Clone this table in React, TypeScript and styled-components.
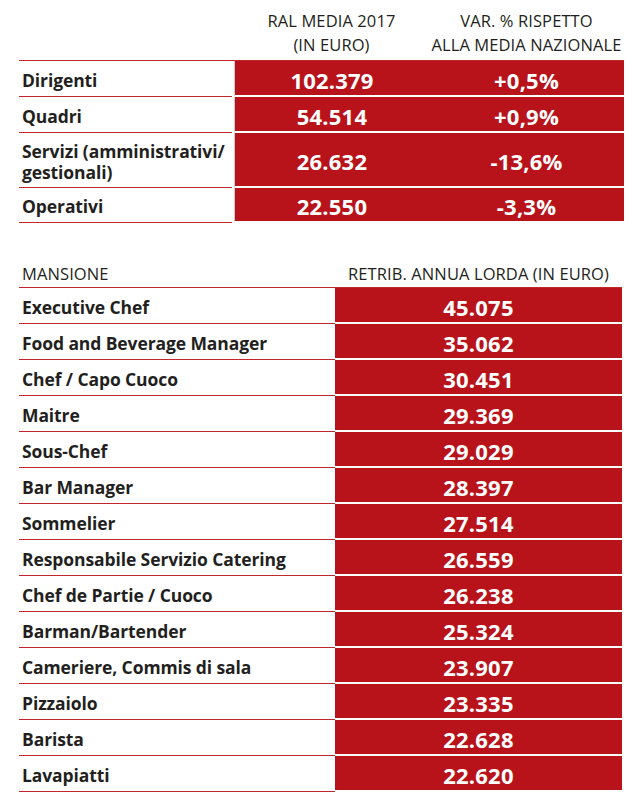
import { createGlobalStyle } from 'styled-components';
import styled from 'styled-components';

const GlobalStyle = createGlobalStyle`
  html, body {
    margin: 0;
    padding: 0;
    background: #ffffff;
  }
  body {
    font-family: 'Open Sans', 'Liberation Sans', sans-serif;
    color: #231f20;
  }
`;

const categories = [
  { label: 'Dirigenti', ral: '102.379', variation: '+0,5%', height: 36 },
  { label: 'Quadri', ral: '54.514', variation: '+0,9%', height: 36 },
  { label: 'Servizi (amministrativi/ gestionali)', ral: '26.632', variation: '-13,6%', height: 55 },
  { label: 'Operativi', ral: '22.550', variation: '-3,3%', height: 35 },
];

const roles = [
  ['Executive Chef', '45.075'],
  ['Food and Beverage Manager', '35.062'],
  ['Chef / Capo Cuoco', '30.451'],
  ['Maitre', '29.369'],
  ['Sous-Chef', '29.029'],
  ['Bar Manager', '28.397'],
  ['Sommelier', '27.514'],
  ['Responsabile Servizio Catering', '26.559'],
  ['Chef de Partie / Cuoco', '26.238'],
  ['Barman/Bartender', '25.324'],
  ['Cameriere, Commis di sala', '23.907'],
  ['Pizzaiolo', '23.335'],
  ['Barista', '22.628'],
  ['Lavapiatti', '22.620'],
];

const App = () => {
  return (
    <>
      <GlobalStyle />
      <Page>
        <SummaryTable>
          <HeaderCell />
          <HeaderCell $center>
            RAL MEDIA 2017
            <br />
            (IN EURO)
          </HeaderCell>
          <HeaderCell $center>
            VAR. % RISPETTO
            <br />
            ALLA MEDIA NAZIONALE
          </HeaderCell>
          {categories.map((row, i) => (
            <SummaryRow key={row.label} $height={row.height} $first={i === 0}>
              <LabelCell $wrap>{row.label}</LabelCell>
              <ValueCell $divider>{row.ral}</ValueCell>
              <ValueCell>{row.variation}</ValueCell>
            </SummaryRow>
          ))}
        </SummaryTable>

        <RoleTable>
          <RoleHeader>
            <HeaderText>MANSIONE</HeaderText>
            <HeaderText $center>RETRIB. ANNUA LORDA (IN EURO)</HeaderText>
          </RoleHeader>
          {roles.map(([name, value]) => (
            <RoleRow key={name}>
              <LabelCell>{name}</LabelCell>
              <ValueCell>{value}</ValueCell>
            </RoleRow>
          ))}
        </RoleTable>
      </Page>
    </>
  );
};

export default App;

const Page = styled.div`
  width: 641px;
  padding: 0 17px 0 19px;
  box-sizing: border-box;
`;

const SummaryTable = styled.div`
  display: grid;
  grid-template-columns: 215px 1fr 1fr;
`;

const HeaderCell = styled.div<{ $center?: boolean }>`
  padding: 9px 0 3px;
  font-size: 16.5px;
  line-height: 24px;
  letter-spacing: 0.1px;
  text-align: ${(p) => (p.$center ? 'center' : 'left')};
  height: 48px;
`;

const SummaryRow = styled.div<{ $height: number; $first?: boolean }>`
  grid-column: 1 / -1;
  display: grid;
  grid-template-columns: subgrid;
  height: ${(p) => p.$height}px;
  border-top: ${(p) => (p.$first ? '1.5px solid #c1272d' : 'none')};
`;

const LabelCell = styled.div<{ $wrap?: boolean }>`
  display: flex;
  align-items: center;
  padding: 3px 0 0 3px;
  font-size: 17.5px;
  font-weight: 700;
  line-height: 21px;
  letter-spacing: -0.1px;
  border-bottom: 1.5px solid #c1272d;
  max-width: ${(p) => (p.$wrap ? '210px' : 'none')};
`;

const ValueCell = styled.div<{ $divider?: boolean }>`
  display: flex;
  align-items: center;
  justify-content: center;
  padding-top: 3px;
  background: #b8131b;
  color: #ffffff;
  font-size: 22px;
  font-weight: 700;
  letter-spacing: 0.2px;
  border-bottom: 2px solid #ffffff;
  border-left: ${(p) => (p.$divider ? '1px solid #c9c9c9' : 'none')};
`;

const RoleTable = styled.div`
  margin-top: 36px;
  width: 603px;
`;

const RoleHeader = styled.div`
  display: grid;
  grid-template-columns: 316px 1fr;
  height: 28px;
  align-items: center;
  border-bottom: 1.5px solid #c1272d;
`;

const HeaderText = styled.div<{ $center?: boolean }>`
  font-size: 16.5px;
  letter-spacing: 0.1px;
  padding-left: ${(p) => (p.$center ? '0' : '3px')};
  text-align: ${(p) => (p.$center ? 'center' : 'left')};
`;

const RoleRow = styled.div`
  display: grid;
  grid-template-columns: 316px 1fr;
  height: 36px;
`;
